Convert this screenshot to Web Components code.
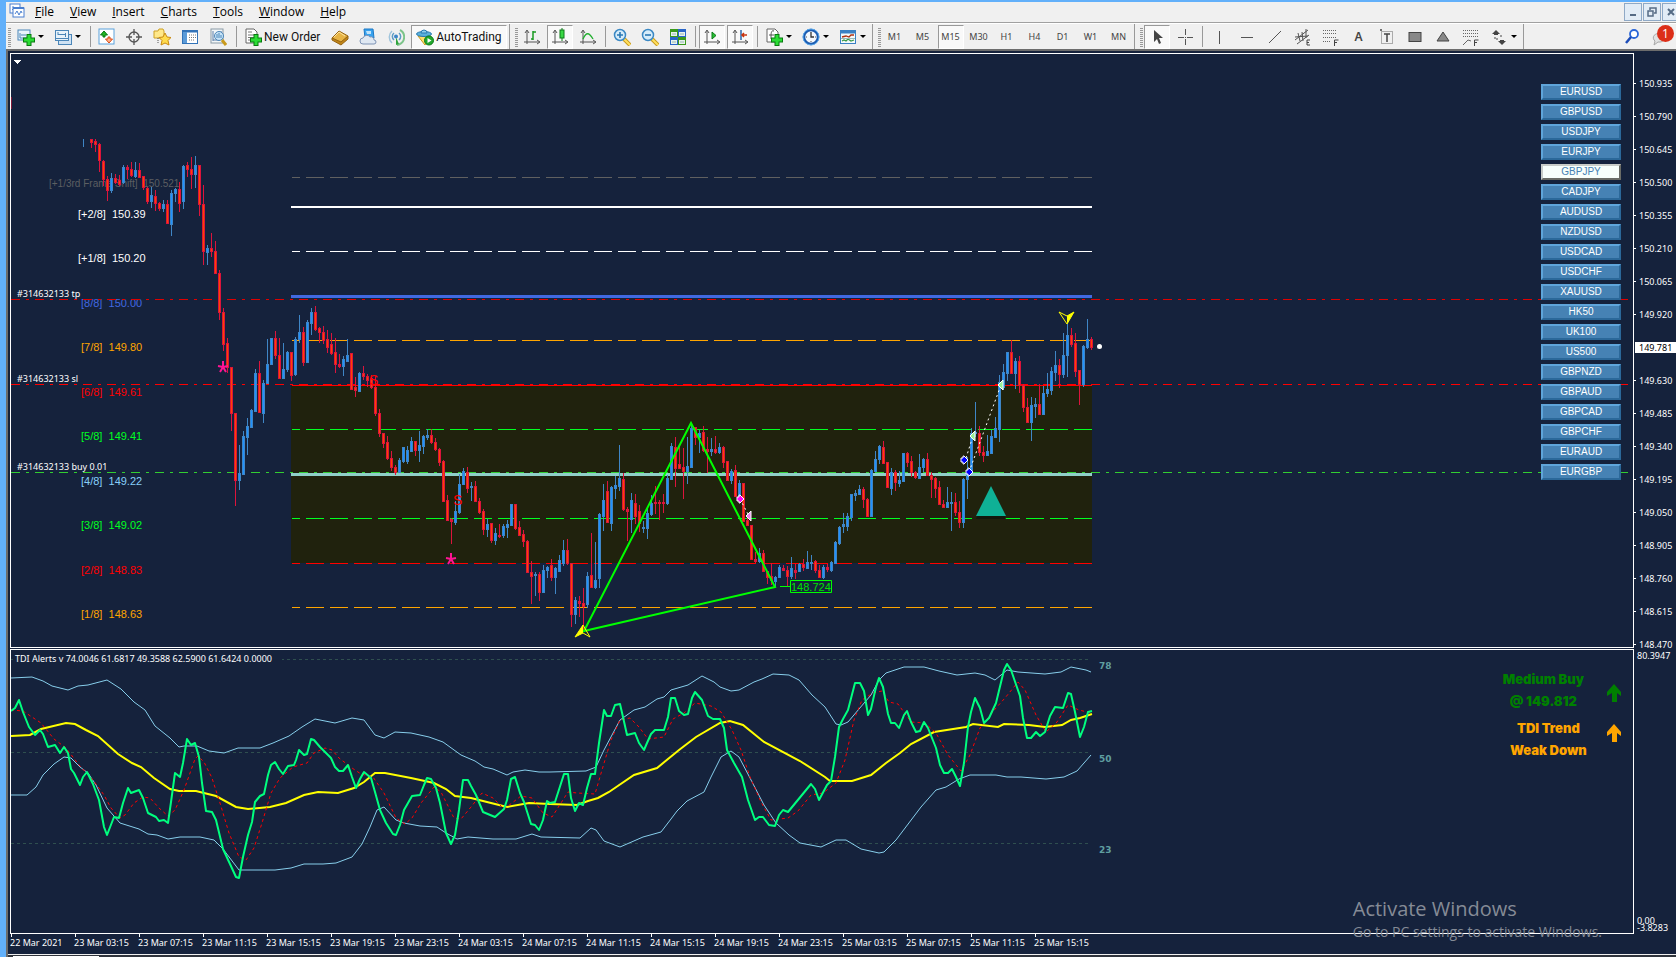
<!DOCTYPE html>
<html lang="en">
<head>
<meta charset="utf-8">
<title>GBPJPY, M15</title>
<style>
html, body { margin: 0; height: 100%; }
body { overflow: hidden; background: #62b0fa; font-family: "Noto Sans", "Open Sans", sans-serif; }
</style>
</head>
<body>
<mt-terminal></mt-terminal>
<script>
const icons = {
  app: '<rect x="1" y="1" width="10" height="9" fill="#fff" stroke="#4a7fd0"/><path d="M3 4h2M3 7l2-2 2 2" stroke="#4a7fd0" fill="none"/><rect x="4" y="5" width="11" height="9" fill="#fff" stroke="#4a7fd0"/><path d="M6 11l2-3 2 4 2-4 1 2" stroke="#4a7fd0" fill="none"/><path d="M4 5h11" stroke="#4a7fd0" stroke-width="2"/>',
  newchart: '<rect x="1" y="2" width="12" height="10" fill="#e8f3fb" stroke="#4b86b8"/><path d="M3 5v5h7M4 7h5" stroke="#4b86b8" fill="none"/><path d="M12 6v12M6 12h12" stroke="#087a10" stroke-width="5"/><path d="M12 7v10M7 12h10" stroke="#2bdc35" stroke-width="3"/>',
  profiles: '<rect x="4.500" y="6.500" width="13" height="10" fill="#cfe2f3" stroke="#4b86b8"/><rect x="1.500" y="2.500" width="13" height="10" fill="#e8f3fb" stroke="#4b86b8"/><path d="M4 4v3M4 6.500h8M11.500 5v4M2 10.500h12" stroke="#4b86b8" fill="none"/>',
  market: '<rect x="2" y="1" width="15" height="15" fill="#fff" stroke="#5aa2dc"/><path d="M7 3l3.500 4H8v2H6V7H3.500z" fill="#22b522" stroke="#087a10"/><path d="M12 15l-3.500-4H11V9h2v2h2.500z" fill="#ffb08a" stroke="#dc4a14"/>',
  cross: '<circle cx="9" cy="9" r="5" fill="none" stroke="#555" stroke-width="1.300"/><path d="M9 1v6M9 11v6M1 9h6M11 9h6" stroke="#555" stroke-width="1.300"/>',
  folder: '<path d="M1 3h4l1-2h4l1 2v7H1z" fill="#ffe88a" stroke="#cda025"/><path d="M5 10v6" stroke="#555" stroke-dasharray="1 1"/><path d="M12 5l2 4 4 .5-3 3 1 4.500-4-2-4 2 1-4.500-3-3 4-.5z" fill="#ffdc4e" stroke="#c98a12"/>',
  terminal: '<rect x="1.500" y="2.500" width="15" height="13" fill="#fff" stroke="#3273b8"/><path d="M1 3.500h16" stroke="#3273b8" stroke-width="2"/><rect x="2" y="4" width="4" height="11" fill="#5b9bd8"/><path d="M8 7h7M8 9.500h7M8 12h5" stroke="#777" stroke-dasharray="1 1"/>',
  tester: '<rect x="2" y="1" width="12" height="14" fill="#f2f6f8" stroke="#8a9aa5"/><path d="M4 3v10M12 3v8M4 12h6" stroke="#5c7fa8"/><circle cx="10" cy="8" r="4.500" fill="#c8e4f8" stroke="#4b86b8"/><path d="M8 6v4M10 5v5M12 7v3" stroke="#4b86b8"/><path d="M13 12l4 5" stroke="#c99a1c" stroke-width="3"/>',
  order: '<path d="M2 1h8l3 3v11H2z" fill="#fff" stroke="#666"/><path d="M4 4h4M4 7h7M4 9.500h7M4 12h3" stroke="#777"/><path d="M12 6v12M6 12h12" stroke="#087a10" stroke-width="5"/><path d="M12 7v10M7 12h10" stroke="#2bdc35" stroke-width="3"/>',
  gold: '<path d="M1 10L8 3l9 5-7 8z" fill="#e7b445" stroke="#966412"/><path d="M1 10l9 4 7-6v3l-7 6-9-5z" fill="#c08518" stroke="#966412"/><path d="M3 9l5-5 6 4" stroke="#ffe7a2" fill="none"/>',
  cloud: '<path d="M5 1h9l1 9H6z" fill="#38a2ee" stroke="#1c78c4"/><path d="M7 3h5v3H8z" fill="#bfe3fb"/><path d="M4 16a3 3 0 010-6 4 4 0 017-1 3 3 0 014 3 2 2 0 010 4z" fill="#dfe8f2" stroke="#7d93b5"/>',
  signal: '<path d="M5 15a8 8 0 010-12" fill="none" stroke="#9fc4dc" stroke-width="1.500"/><path d="M7 12a4.500 4.500 0 010-7M12 5a4.500 4.500 0 010 7" fill="none" stroke="#5c9cc4" stroke-width="1.500"/><path d="M13 2a8 8 0 01-1 14.500l-2 .5" fill="none" stroke="#7cc48a" stroke-width="2"/><path d="M9 9v8l3-1z" fill="#2fa33c"/><circle cx="9" cy="8.500" r="2" fill="#3c86c8"/>',
  expert: '<path d="M2 8h13l-6 9z" fill="#ffdf6b" stroke="#c99a1c"/><ellipse cx="8" cy="6" rx="7.500" ry="2.500" fill="#5ab0dc" stroke="#2a7ab0"/><path d="M5 5a3 3 0 016 0z" fill="#8fd0f0" stroke="#2a7ab0"/><circle cx="13" cy="12.500" r="4.500" fill="#22a82c" stroke="#0d7a18"/><path d="M11.500 10v5l4-2.500z" fill="#fff"/>',
  bars: '<path d="M4 3v13M1 14h15M2 5l2-3 2 3M14 12l3 2-3 2" stroke="#555" fill="none"/><path d="M10 3v9M8 11h2M10 4h3" stroke="#1a9a22" fill="none" stroke-width="1.500"/>',
  candles: '<path d="M4 3v13M1 14h15M2 5l2-3 2 3M14 12l3 2-3 2" stroke="#555" fill="none"/><path d="M11 0v13" stroke="#0d7a18"/><rect x="9" y="2" width="4" height="8" fill="#38d844" stroke="#0d7a18"/>',
  line: '<path d="M4 3v13M1 14h15M2 5l2-3 2 3M14 12l3 2-3 2" stroke="#555" fill="none"/><path d="M4 11c3-7 6-7 10 0" stroke="#1fae2c" fill="none" stroke-width="1.300"/>',
  zoomin: '<path d="M11 11l6 6" stroke="#c99a1c" stroke-width="4"/><path d="M11 11l6 6" stroke="#ffe060" stroke-width="2"/><circle cx="7" cy="7" r="5.500" fill="#d6ecfa" stroke="#3a88c4" stroke-width="1.500"/><path d="M4 7h6M7 4v6" stroke="#2a78b4" stroke-width="1.600"/>',
  zoomout: '<path d="M11 11l6 6" stroke="#c99a1c" stroke-width="4"/><path d="M11 11l6 6" stroke="#ffe060" stroke-width="2"/><circle cx="7" cy="7" r="5.500" fill="#d6ecfa" stroke="#3a88c4" stroke-width="1.500"/><path d="M4 7h6" stroke="#2a78b4" stroke-width="1.600"/>',
  tile: '<rect x="1" y="1" width="8" height="8" fill="#3a9a1c"/><rect x="9" y="1" width="8" height="8" fill="#2a66c8"/><rect x="1" y="9" width="8" height="8" fill="#2a66c8"/><rect x="9" y="9" width="8" height="8" fill="#3a9a1c"/><path d="M2 4h6v4H2zM10 4h6v4h-6zM2 12h6v4H2zM10 12h6v4h-6z" fill="#e8f2ee"/><path d="M3 6h4M11 6h4M3 14h4M11 14h4" stroke="#9ab8b0"/>',
  scroll: '<path d="M4 3v13M1 14h15M2 5l2-3 2 3M14 12l3 2-3 2" stroke="#555" fill="none"/><path d="M9 4v7l4-3.500z" fill="#28c034" stroke="#0d7a18"/>',
  shift: '<path d="M4 3v13M1 14h15M2 5l2-3 2 3M14 12l3 2-3 2" stroke="#555" fill="none"/><path d="M10 2v10" stroke="#2a66a8" stroke-width="1.500"/><path d="M11 7h5M13 5l-2 2 2 2" stroke="#c8320c" fill="none" stroke-width="1.500"/>',
  indicators: '<path d="M2 1h8l3 3v10H2z" fill="#fff" stroke="#666"/><path d="M9 3c-3-1-3 2-3 8M4 7h5" stroke="#555" fill="none"/><path d="M12 6v12M6 12h12" stroke="#087a10" stroke-width="5"/><path d="M12 7v10M7 12h10" stroke="#2bdc35" stroke-width="3"/>',
  clock: '<circle cx="9" cy="9" r="7" fill="#f4f8fc" stroke="#1c5cb0" stroke-width="2.500"/><circle cx="9" cy="9" r="8" fill="none" stroke="#5aa8ec"/><path d="M9 4v5h3" stroke="#333" fill="none" stroke-width="1.300"/><path d="M4 9h1M13 9h1M9 13v1" stroke="#555"/>',
  template: '<rect x="1.500" y="2.500" width="15" height="13" fill="#f4fafc" stroke="#3a80c4"/><path d="M1 4h16" stroke="#3a80c4" stroke-width="3"/><path d="M3 9l4-1 3 1 2-2h3" stroke="#b03010" fill="none" stroke-width="1.300"/><path d="M3 13l2-1 2 1 2-2 3 2 3-1" stroke="#3a9a48" fill="none" stroke-width="1.300"/><path d="M2 10.500h14" stroke="#9bb"/>',
  pointer: '<path d="M6 2v12l3-3 2 5 2-1-2-5h4z" fill="#444"/>',
  cursor: '<path d="M9.500 1v6M9.500 11v6M2 9.500h6M11 9.500h6M9 9.500h1" stroke="#555"/>',
  vline: '<path d="M9.500 3v13" stroke="#555"/>',
  hline: '<path d="M3 9.500h12" stroke="#555"/>',
  trend: '<path d="M3 15L15 3" stroke="#555"/>',
  channel: '<path d="M1 12L14 2M3 16L15 7M4 5l2 8M8 4l1 9M12 1v9M1 9l13-1" stroke="#555" fill="none"/><path d="M16 12h-3v5h3M13 14.500h2" stroke="#444" fill="none"/>',
  fibo: '<path d="M1 2.500h14M1 5.500h14M1 9.500h14M1 13.500h8" stroke="#666" stroke-dasharray="1 1"/><path d="M12.500 18v-6h4M12 14.500h3" stroke="#444" fill="none"/>',
  label: '<rect x="3.500" y="3.500" width="11" height="12" fill="none" stroke="#666" stroke-dasharray="1 1"/><path d="M6 6h6M9 6v8M2 2h2" stroke="#444" stroke-width="1.500"/>',
  rect: '<rect x="3" y="4.500" width="12" height="9" fill="#888" stroke="#444"/>',
  tri: '<path d="M9 4l6 9H3z" fill="#888" stroke="#444"/>',
  expansion: '<path d="M1 2.500h15M1 5.500h15M1 8.500h15" stroke="#666" stroke-dasharray="1 1"/><path d="M1 17l5-5 3 1" stroke="#666" fill="none"/><path d="M12.500 18v-6h4M12 14.500h3" stroke="#444" fill="none"/>',
  arrows: '<path d="M6 2l4 4H8v1H4V6H2zM12 17l-4-4h2v-1h4v1h2z" fill="#444"/><path d="M5 9v2h3M10 8h3" stroke="#444" stroke-dasharray="2 1" fill="none"/>',
  search: '<circle cx="11" cy="6" r="4" fill="#fff" stroke="#2a66d8" stroke-width="1.800"/><path d="M8 9l-5 6" stroke="#1c4cb8" stroke-width="2.500"/>',
  chat: '<path d="M3 12c-3-5 4-8 8-6 4 3 2 9-4 8l-4 3 1-4z" fill="#e2e2e2" stroke="#a8a8a8"/>',
};
const svg = (name) => `<svg viewBox="0 0 18 18" width="18" height="18" aria-hidden="true">${icons[name]}</svg>`;

function define(name, css, html) {
  customElements.define(name, class extends HTMLElement {
    constructor() {
      super();
      const t = document.createElement('template');
      t.innerHTML = `<style>*{box-sizing:border-box}${css}</style>${typeof html === 'function' ? html(this) : html}`;
      this.attachShadow({ mode: 'open' }).append(t.content.cloneNode(true));
    }
  });
}

/* ---------- tool bar parts ---------- */
define('mt-tool', `
  :host { display: block; flex: none; height: 24px; margin-right: 2px; }
  :host([menu]) { margin-right: 0; }
  button { display: flex; align-items: center; justify-content: center; min-width: 26px; height: 24px; margin: 0; padding: 0; border: 1px solid transparent; background: none; color: #444; font: 9px "Noto Sans", sans-serif; }
  svg { display: block; flex: none; }
  :host([menu]) button { width: 37px; justify-content: flex-start; padding-left: 3px; }
  :host([menu]) button::after { content: ""; border: 3px solid transparent; border-top-color: #000; border-bottom: 0; margin-left: 3px; }
  :host([pressed]) button { border-color: #999 #fff #fff #999; background: #f9f9f9; }
  :host([wide]) button { gap: 2px; padding: 0 4px; font-size: 12px; font-family: Roboto, sans-serif; color: #111; }
  :host([glyph]) button { font-size: 12px; font-weight: 600; }
`, (el) => {
  const icon = el.getAttribute('icon'), name = el.getAttribute('name');
  return `<button type="button" ${name ? `aria-label="${name}"` : ''}>${icon ? svg(icon) : ''}<slot></slot></button>`;
});
define('mt-divider', `
  :host { display: flex; justify-content: center; flex: none; width: 6px; height: 21px; }
  i { width: 1px; background: #999; }
`, '<i></i>');
define('mt-grip', `
  :host { display: block; flex: none; width: 10px; height: 25px; padding: 4px 0 3px 5px; border-left: 1px solid #999; }
  :host([first]) { width: 7px; padding-left: 2px; border: 0; }
  i { display: block; width: 3px; height: 19px; background: repeating-linear-gradient(#999 0 1px, transparent 1px 2px); }
`, '<i></i>');

define('mt-menu-bar', `
  :host { display: flex; align-items: center; height: 20px; background: #f0f0f0; padding-left: 3px; }
  svg { flex: none; }
  nav { display: flex; flex: 1; }
  nav button { border: 0; background: none; margin: 0; padding: 0 8px; font: 12px/18px "Open Sans", sans-serif; color: #000; }
  .win { display: flex; gap: 1px; margin-right: -4px; }
  .win button { display: grid; place-items: center; width: 18px; height: 18px; padding: 0; border: 1px solid #8fa9c6; background: #e2ecf6; }
`, `${svg('app')}<nav aria-label="Main">${['File','View','Insert','Charts','Tools','Window','Help'].map(m => `<button type="button"><u>${m[0]}</u>${m.slice(1)}</button>`).join('')}</nav>
<div class="win">
<button type="button" aria-label="Minimize"><svg width="10" height="10"><path d="M2 8h6" stroke="#556b85" stroke-width="2"/></svg></button>
<button type="button" aria-label="Restore"><svg width="10" height="10"><path d="M3 3V1h6v5H7M1 4h5v5H1z" stroke="#556b85" fill="none" stroke-width="1.500"/></svg></button>
<button type="button" aria-label="Close"><svg width="10" height="10"><path d="M2 2l6 6M8 2L2 8" stroke="#556b85" stroke-width="2"/></svg></button></div>`);

define('mt-toolbar', `
  :host { display: flex; align-items: center; height: 26px; background: #f0f0f0; border-top: 1px solid #fff; padding-right: 1px; box-shadow: 0 -1px #a0a0a0; }
  .end { margin-left: auto; display: flex; }
  .edge { width: 1px; height: 25px; background: #999; }
  .chat { position: relative; display: block; }
  .badge { position: absolute; right: 1px; top: 0; width: 17px; height: 17px; border-radius: 50%; background: #dc2e18; color: #fff; font: 12px/17px "Open Sans", sans-serif; text-align: center; }
`, `<mt-grip first></mt-grip>
<mt-tool icon="newchart" name="New chart" menu></mt-tool><mt-tool icon="profiles" name="Profiles" menu></mt-tool><mt-divider></mt-divider>
<mt-tool icon="market" name="Market Watch"></mt-tool><mt-tool icon="cross" name="Data Window"></mt-tool><mt-tool icon="folder" name="Navigator"></mt-tool><mt-tool icon="terminal" name="Terminal"></mt-tool><mt-tool icon="tester" name="Strategy Tester"></mt-tool><mt-divider></mt-divider>
<mt-tool icon="order" wide>New Order</mt-tool>
<mt-tool icon="gold" name="MetaEditor"></mt-tool><mt-tool icon="cloud" name="Virtual hosting"></mt-tool><mt-tool icon="signal" name="Signals"></mt-tool>
<mt-tool icon="expert" wide pressed>AutoTrading</mt-tool><mt-grip></mt-grip>
<mt-tool icon="bars" name="Bar chart"></mt-tool><mt-tool icon="candles" name="Candlesticks" pressed></mt-tool><mt-tool icon="line" name="Line chart"></mt-tool><mt-divider></mt-divider>
<mt-tool icon="zoomin" name="Zoom in"></mt-tool><mt-tool icon="zoomout" name="Zoom out"></mt-tool><mt-tool icon="tile" name="Tile windows"></mt-tool><mt-divider></mt-divider>
<mt-tool icon="scroll" name="Auto scroll" pressed></mt-tool><mt-tool icon="shift" name="Chart shift" pressed></mt-tool><mt-divider></mt-divider>
<mt-tool icon="indicators" name="Indicators" menu></mt-tool><mt-tool icon="clock" name="Periods" menu></mt-tool><mt-tool icon="template" name="Templates" menu></mt-tool><mt-grip></mt-grip>
${['M1','M5','M15','M30','H1','H4','D1','W1','MN'].map(t => `<mt-tool ${t === 'M15' ? 'pressed' : ''}>${t}</mt-tool>`).join('')}<mt-grip></mt-grip>
<mt-tool icon="pointer" name="Cursor" pressed></mt-tool><mt-tool icon="cursor" name="Crosshair"></mt-tool><mt-divider></mt-divider>
<mt-tool icon="vline" name="Vertical line"></mt-tool><mt-tool icon="hline" name="Horizontal line"></mt-tool><mt-tool icon="trend" name="Trendline"></mt-tool><mt-tool icon="channel" name="Channel"></mt-tool><mt-tool icon="fibo" name="Fibonacci"></mt-tool><mt-tool glyph>A</mt-tool><mt-tool icon="label" name="Text label"></mt-tool><mt-tool icon="rect" name="Rectangle"></mt-tool><mt-tool icon="tri" name="Triangle"></mt-tool><mt-tool icon="expansion" name="Expansion"></mt-tool><mt-tool icon="arrows" name="Arrows" menu></mt-tool><span class="edge"></span>
<span class="end"><mt-tool icon="search" name="Search"></mt-tool><span class="chat"><mt-tool icon="chat" name="Messages"></mt-tool><span class="badge">1</span></span></span>`);

/* ---------- price chart ---------- */
/* One entry per bar: direction, high, body top, body bottom, low. Bars are 4px apart. */
const bars = `b139 139 139 147|-|r139 139 142 148|r139 141 144 152|r143 144 160 172|r160 161 179 186|r176 179 190 201|b173 178 190 193|r174 178 182 184|r175 180 184 186|b165 167 182 184|r165 167 169 179|r162 169 175 177|b162 170 176 178|r163 170 177 178|r176 176 187 190|r187 188 201 204|b187 195 201 208|r190 196 203 211|r202 203 208 211|b200 204 208 212|r200 204 223 224|b190 193 224 236|b188 189 193 202|r182 189 203 212|b165 166 201 209|r162 165 169 177|r157 169 174 189|b156 165 174 188|r165 165 204 216|r185 204 251 265|b245 248 252 265|r233 248 251 257|r241 251 273 274|r270 273 312 320|r308 312 344 351|r338 343 367 373|r367 367 413 431|r413 413 480 506|b445 473 480 490|b431 436 474 475|b418 426 437 455|b409 410 427 428|b369 373 411 412|r361 373 412 413|b380 383 413 423|b339 364 383 384|b338 338 364 365|r331 338 355 359|r338 355 378 379|b343 369 378 379|b351 352 369 372|r352 352 375 381|b337 339 374 376|b315 332 339 343|r327 332 362 366|b320 322 362 363|b308 312 323 335|r306 312 329 331|r327 328 332 343|r326 332 340 344|r330 339 347 353|r333 344 353 355|r338 352 364 373|r354 364 366 368|b356 359 366 376|b339 355 361 362|r353 353 389 390|r377 387 390 397|b372 373 391 392|r366 373 376 380|r374 376 380 387|r375 378 387 389|r376 387 413 416|r409 413 433 437|r433 433 443 448|r436 442 458 460|r451 458 467 471|r465 467 472 475|b458 460 472 472|b447 447 461 463|b446 450 461 464|b437 441 451 451|r441 441 450 456|b431 445 450 462|b435 436 446 454|b429 435 437 440|r429 435 442 444|r438 442 449 451|r448 449 462 466|r460 461 501 502|r495 500 520 521|r518 519 521 544|b501 511 522 525|b474 484 512 514|b468 471 484 485|r467 472 488 493|b482 486 487 501|r481 486 501 501|r498 501 512 514|r509 511 529 535|b519 524 529 537|r523 523 540 543|b528 533 540 545|r524 535 536 538|b524 526 535 538|b520 524 527 538|b504 504 525 525|r504 504 528 530|r521 527 535 536|r530 534 541 547|r540 541 572 573|r561 572 576 604|b572 574 575 596|r572 574 592 601|b565 570 592 592|b566 567 570 578|r559 565 577 581|b567 568 577 594|b555 560 571 572|b540 550 563 566|r539 550 563 565|r563 563 614 627|b597 600 614 624|r596 601 603 617|r588 603 606 632|b572 576 604 608|r533 575 587 587|b542 580 587 589|b513 514 578 588|b484 500 516 531|r481 491 522 523|b486 487 523 531|b476 485 488 499|b445 478 486 491|r473 479 509 511|r507 509 511 541|b493 500 519 533|r494 503 516 524|r505 511 523 532|b521 527 528 533|b508 513 528 539|b495 503 514 516|r486 502 503 514|r500 502 503 520|r494 502 503 513|b475 478 503 505|b443 446 479 480|r437 447 468 487|r446 464 468 468|r448 467 471 499|b437 466 471 484|b425 428 467 467|r427 427 437 445|b430 433 437 453|r426 432 450 452|r437 449 451 473|b438 449 451 456|r436 449 452 454|b443 447 452 454|r446 447 462 468|r461 461 480 480|b469 471 480 484|r465 470 496 497|b480 483 496 496|r483 483 521 522|r515 520 525 525|r525 525 559 560|r552 559 561 563|b548 553 561 563|r550 553 571 572|r571 571 577 584|r563 576 580 585|b576 577 581 587|b565 567 577 577|r565 568 570 571|r566 570 576 587|b557 568 576 579|r564 570 572 579|b563 564 571 571|r559 564 567 571|b551 562 568 568|b555 562 563 570|r560 561 570 573|r565 570 577 577|b565 567 577 579|r564 567 569 572|b561 562 570 572|b541 542 563 563|b526 527 543 545|b513 524 526 533|b513 516 526 531|b494 494 517 521|b490 493 495 501|b485 489 494 494|r487 489 499 508|r498 499 516 517|b469 470 516 517|b451 459 471 471|b445 446 459 464|r441 447 463 464|r462 462 487 488|b468 472 488 495|r470 472 482 491|b471 480 483 487|b453 453 481 482|r452 453 462 467|r456 461 472 477|r471 472 477 479|b454 467 478 478|b458 459 467 472|r453 459 475 475|r472 475 479 498|r477 478 488 498|r481 487 504 505|r500 504 507 507|b487 502 507 507|b492 502 503 531|r493 502 512 516|r501 512 522 528|b478 479 522 528|b457 470 479 499|b428 433 472 472|b402 432 433 437|r426 433 452 456|r446 452 455 462|b435 451 455 456|b430 436 453 454|b417 428 437 437|b375 382 429 442|b364 372 387 390|b352 352 373 381|r340 352 373 373|b358 361 373 389|r356 361 385 393|r384 385 407 412|r398 407 422 423|b397 405 422 441|b398 404 406 418|r384 404 414 415|b386 393 414 414|b373 389 393 397|b367 371 390 395|b351 365 372 381|r359 365 374 388|b333 355 374 378|b324 335 355 377|r328 335 344 347|r333 343 371 377|r370 370 384 405|b345 346 384 387|b319 339 347 349|r337 339 347 350`.split('|');
const drawBars = () => {
  const edge = { r: '', b: '' }, core = { r: '', b: '' };
  bars.forEach((bar, i) => {
    if (bar === '-') return;
    const c = bar[0], [h, t, b, l] = bar.slice(1).split(' ').map(Number), x = 83 + 4 * i;
    edge[c] += `M${x} ${h}h1V${l}h-1z`;
    if (b > t) edge[c] += `M${x - 1} ${t}h3V${b + 1}h-3z`;
    if (b - t > 2) core[c] += `M${x} ${t + 1}h1V${b}h-1z`;
  });
  return `<path fill="#dc143c" d="${edge.r}"/><path fill="#3f86c6" d="${edge.b}"/><path fill="#ff4500" d="${core.r}"/><path fill="#1e90ff" d="${core.b}"/>`;
};
const level = (y, color, w = 0) => w
  ? `<rect x="291" y="${y}" width="801" height="${w}" fill="${color}"/>`
  : `<path d="M292 ${y + .5}H1092" stroke="${color}" stroke-dasharray="18 6" stroke-dashoffset="10"/>`;
const trade = (y, color) => `<path d="M11 ${y + .5}H1628" stroke="${color}" stroke-dasharray="9 6 3 6"/>`;
const note = (x, y, color, text) => `<text x="${x}" y="${y}" fill="${color}">${text.replace(/  /g, '&nbsp;&nbsp;')}</text>`;
const star = (x, y) => `<path d="M${x} ${y}v-6M${x} ${y}l-5-1M${x} ${y}l5-1M${x} ${y}l-3 5M${x} ${y}l3 5" stroke="#ff1493" stroke-width="2" fill="none"/>`;
const entry = (x, y, color) => `<path d="M${x - 3} ${y - 2}h2v-2h1l4 4-4 4h-1v-2h-2z" fill="${color}" stroke="#fff"/>`;
const exit = (x, y, color) => `<path d="M${x - 3} ${y}l5-5v10z" fill="${color}" stroke="#fff"/>`;

define('mt-price-chart', `
  :host { display: flex; position: relative; justify-content: flex-end; border: 1px solid #fff; min-width: 0; min-height: 0; overflow: hidden; }
  svg { position: absolute; inset: 0; width: 100%; height: 100%; }
  .murrey { font: 11px "Liberation Sans", Arial, sans-serif; }
  .shift { font: 10px "Liberation Sans", Arial, sans-serif; }
  .order { font: 9px "Noto Sans", sans-serif; }
  .mark { font: 14px "Liberation Sans", Arial, sans-serif; }
  slot { display: block; position: relative; }
`, `<svg role="img" aria-label="GBPJPY M15 candles"><g transform="translate(-11 -54)" fill="none">
<g shape-rendering="crispEdges">
<path d="M13 60h8l-4 4z" fill="#fff"/><rect x="11" y="97" width="1" height="12" fill="#801838"/>
<rect x="291" y="386" width="801" height="177" fill="#20220d"/>
${level(177, '#606060')}${level(206, '#fff', 2)}${level(251, '#fff')}${level(295, '#4169e1', 3)}${level(340, '#ffa500')}
<path d="M292 385.500H1092" stroke="#f00"/>${level(429, '#00ff21')}${level(473, '#8fd0c8', 3)}${level(518, '#00ff21')}${level(563, '#f00')}${level(607, '#ffa500')}
</g>
<g class="shift">${note(49, 187, '#5c5f62', '[+1/3rd Frame Shift]  150.521')}</g>
<g class="murrey">${note(78, 218, '#fff', '[+2/8]  150.39')}${note(78, 262, '#fff', '[+1/8]  150.20')}${note(81, 307, '#4169e1', '[8/8]  150.00')}${note(81, 351, '#ffa500', '[7/8]  149.80')}${note(81, 396, '#f00', '[6/8]  149.61')}${note(81, 440, '#00ff21', '[5/8]  149.41')}${note(81, 485, '#87cefa', '[4/8]  149.22')}${note(81, 529, '#00ff21', '[3/8]  149.02')}${note(81, 574, '#f00', '[2/8]  148.83')}${note(81, 618, '#ffa500', '[1/8]  148.63')}</g>
<g class="order">${note(17, 297, '#fff', '#314632133 tp')}${note(17, 382, '#fff', '#314632133 sl')}${note(17, 470, '#fff', '#314632133 buy 0.01')}</g>
<g shape-rendering="crispEdges">${trade(299, '#e00000')}${trade(384, '#f00')}${trade(472, '#32cd32')}${drawBars()}</g>
<g class="mark">${note(369, 385, '#f00', 'S')}${note(453, 505, '#f00', 'S')}</g>
${star(223, 367)}${star(451, 559)}
<path d="M584 631L691 423L775 587z" stroke="#0f0" stroke-width="2"/>
<path d="M780 586.500h10M790.500 580.500h41v12h-41z" stroke="#0f0"/><g class="murrey">${note(791, 591, '#00e000', '148.724')}</g>
<path d="M583 625l-8 12 8-4 7 4z" stroke="#ff0"/><path d="M583 625l-8 12 8-4z" fill="#ff0"/>
<path d="M1067 324l-8-12 8 4 7-4z" stroke="#ff0"/><path d="M1067 324l7-12-7 4z" fill="#ff0"/>
<path d="M966 458l7-22M969 472l32-87M740 499l9 17" stroke="#fff" stroke-dasharray="2 3"/>
${entry(964, 460, '#00f')}${entry(969, 472, '#00f')}${entry(740, 499, '#f0f')}${exit(973, 436, '#98f098')}${exit(1001, 385, '#98f098')}${exit(749, 516, '#ee82ee')}
<path d="M991 488l15 31h-30z" fill="#12180c"/><path d="M991 486l15 30h-30z" fill="#0fb196"/>
<circle cx="1099.500" cy="346.500" r="2.500" fill="#fff"/>
</g></svg><slot></slot>`);

const symbols = 'EURUSD GBPUSD USDJPY EURJPY GBPJPY CADJPY AUDUSD NZDUSD USDCAD USDCHF XAUUSD HK50 UK100 US500 GBPNZD GBPAUD GBPCAD GBPCHF EURAUD EURGBP'.split(' ');
define('mt-symbol-list', `
  :host { display: flex; flex-direction: column; gap: 4px; padding: 30px 12px 0 0; }
  button { width: 80px; height: 16px; margin: 0; padding: 0; border: 2px solid; border-color: #5fa5da #2b6899 #2b6899 #5fa5da; background: #4682b4; color: #fff; font: 10px/12px "Liberation Sans", Arial, sans-serif; text-align: center; }
  button[aria-pressed] { border-color: #c8ccc8 #6a6c66 #6a6c66 #c8ccc8; background: #f8fffb; color: #4682b4; }
`, symbols.map(s => `<button type="button" ${s === 'GBPJPY' ? 'aria-pressed="true"' : ''}>${s}</button>`).join(''));

/* ---------- oscillator ---------- */
const upper = '11,678 32,677 43,681 52,686 68,690 78,686 88,685 107,680 121,689 134,702 145,710 155,726 170,738 179,747 184,746 197,746 209,751 224,753 238,748 260,748 273,743 289,736 302,727 315,719 335,723 352,718 364,720 375,735 384,738 395,732 411,733 429,737 443,742 461,755 475,761 484,767 493,769 507,775 513,772 525,770 539,772 550,772 586,771 596,767 604,750 620,720 634,710 645,707 657,699 664,697 671,690 688,685 702,676 714,682 720,687 731,691 739,690 754,682 762,679 773,674 789,675 799,680 812,695 825,707 836,724 841,725 848,722 859,709 871,695 879,680 886,673 904,667 924,667 939,671 957,675 975,673 985,675 995,680 1007,670 1018,672 1045,674 1061,672 1071,667 1086,670 1091,672';
const lower = '11,795 27,795 36,787 43,775 54,764 64,757 71,758 80,767 88,773 96,785 107,808 120,823 139,829 148,834 157,835 168,839 180,837 200,837 214,840 223,849 239,870 254,870 275,870 291,868 304,864 323,864 336,863 352,857 362,844 370,827 377,810 384,807 396,820 404,823 420,826 437,827 446,833 457,839 468,837 493,839 516,839 532,834 541,837 580,838 591,828 596,830 604,841 620,847 643,837 661,832 671,819 677,811 687,801 704,792 711,777 721,757 731,751 739,757 750,778 764,805 776,823 789,835 800,843 821,847 836,840 846,840 861,849 879,853 884,852 896,840 921,807 936,790 946,787 959,779 970,775 996,775 1007,777 1021,777 1046,779 1064,777 1077,771 1091,755';
const base = '11,736 30,735 41,729 66,723 75,724 86,730 98,736 118,754 132,763 141,767 154,778 170,789 179,791 196,791 216,796 236,807 248,809 270,807 286,803 304,795 318,792 338,793 354,788 364,782 375,773 385,773 411,778 434,783 446,789 455,796 471,798 491,803 507,807 529,803 550,804 577,805 588,801 598,798 609,792 634,775 657,768 679,750 696,737 720,723 730,721 743,725 764,742 800,761 825,777 830,781 852,781 871,775 886,763 900,753 911,744 934,732 966,727 973,724 998,727 1004,724 1029,725 1045,727 1062,725 1071,720 1080,718 1092,714';
const fast = '11,711 15,708 19,700 23,712 29,727 35,735 40,730 43,734 48,747 55,745 60,753 64,747 68,753 71,769 74,773 80,785 83,777 87,772 93,784 99,800 104,827 107,835 114,817 119,818 123,803 128,788 131,793 139,790 143,798 148,813 156,817 159,821 164,820 168,823 171,802 175,773 180,777 183,763 187,739 191,745 195,743 199,757 202,783 206,811 212,812 216,820 223,849 230,864 236,877 239,878 243,857 248,835 252,822 255,802 260,796 264,794 268,775 271,765 275,762 279,769 283,774 288,766 294,765 296,760 299,750 304,755 307,754 311,739 314,740 320,747 331,758 335,767 339,771 343,771 348,765 352,777 356,788 360,779 364,772 371,778 375,792 380,810 386,823 393,834 396,835 400,825 404,810 412,796 420,795 424,785 427,778 431,779 436,788 440,803 446,833 451,844 455,835 459,810 463,780 468,780 471,786 476,795 483,812 495,817 504,809 507,800 511,779 515,777 520,793 524,802 531,824 535,825 539,830 543,820 547,801 550,803 555,802 564,774 568,774 571,798 575,811 579,803 583,805 587,788 591,774 595,774 599,743 604,710 607,716 611,716 615,705 620,704 623,717 627,735 635,733 639,743 644,750 647,743 651,734 655,730 664,730 668,717 671,698 675,698 679,711 684,715 688,714 692,698 695,692 702,700 708,716 713,719 720,719 724,728 727,750 734,763 742,777 748,800 755,820 759,817 763,817 769,825 775,826 779,815 783,810 788,812 811,784 815,789 819,800 827,785 831,781 835,757 839,727 843,719 848,710 855,683 860,683 864,691 868,715 871,709 876,687 879,678 883,687 888,714 891,723 895,723 899,728 904,715 907,711 911,722 916,732 920,731 924,722 928,728 936,748 940,765 944,773 948,773 952,769 956,777 960,786 964,763 968,727 971,712 975,698 980,708 984,723 989,718 996,703 1004,670 1007,664 1011,670 1020,696 1023,718 1027,738 1031,738 1036,732 1040,736 1045,732 1050,716 1055,707 1063,708 1068,693 1071,694 1075,712 1080,737 1084,727 1088,712 1092,711';
const signal = '11,710 23,711 41,723 54,739 66,748 79,765 93,780 104,795 111,808 120,818 125,815 134,803 143,797 150,798 159,808 168,816 175,810 184,790 195,759 198,756 204,762 212,778 220,803 229,833 239,857 246,860 254,848 262,823 271,793 280,778 293,767 307,763 314,753 325,748 332,750 339,758 352,768 361,774 373,777 384,793 396,818 405,824 412,818 421,803 434,787 441,792 454,818 461,819 471,807 482,793 493,798 504,809 512,803 521,796 532,798 543,813 552,817 561,803 568,792 577,793 595,794 602,770 611,740 620,720 630,718 639,727 648,739 664,737 673,719 684,713 695,703 711,706 721,712 732,730 741,750 750,777 761,802 771,820 788,818 798,811 811,795 823,793 836,783 845,760 854,720 862,700 873,693 882,691 889,702 898,704 911,722 925,723 936,733 948,755 961,771 970,755 980,728 996,708 1005,698 1018,682 1025,690 1036,715 1046,732 1057,722 1068,705 1079,710 1091,713';
const up = (color) => `<svg width="16" height="18" aria-hidden="true"><path d="M8 0l7 8v4l-4-3v9H6V9l-5 3V8z" fill="${color}"/></svg>`;
define('mt-oscillator', `
  :host { display: flex; position: relative; justify-content: flex-end; align-items: flex-start; border: 1px solid #fff; min-width: 0; min-height: 0; overflow: hidden; }
  .plot { position: absolute; inset: 0; width: 100%; height: 100%; }
  .head { font: 9px "Noto Sans", sans-serif; }
  .grid { font: bold 9px "DejaVu Sans", sans-serif; }
  aside { position: relative; display: flex; padding: 18px 11px 0 0; font: 900 13px/22px Inter, sans-serif; text-align: center; }
  p { margin: 0 0 5px; color: #008000; padding-right: 22px; }
  p + p { color: #ffa500; padding: 0 17px 0 5px; }
  .arrows { display: flex; flex-direction: column; gap: 22px; padding-top: 16px; }
`, `<svg class="plot" role="img" aria-label="TDI oscillator"><g transform="translate(-11 -650)" fill="none">
<path d="M11 659.500H1088M11 752.500H1088M11 843.500H1088" stroke="#2f4f4f" stroke-dasharray="3 3"/>
<rect x="13" y="655" width="269" height="9" fill="#15223c"/>
<g stroke="#87ceeb" stroke-width="1"><polyline points="${upper}"/><polyline points="${lower}"/></g>
<polyline points="${base}" stroke="#ff0" stroke-width="2"/>
<polyline points="${signal}" stroke="#f00" stroke-dasharray="3 3"/>
<polyline points="${fast}" stroke="#00ff7f" stroke-width="2" stroke-linejoin="round"/>
<g class="head">${note(15, 662, '#fff', 'TDI Alerts v 74.0046 61.6817 49.3588 62.5900 61.6424 0.0000')}</g>
<g class="grid">${note(1099, 669, '#5f9ea0', '78')}${note(1099, 762, '#5f9ea0', '50')}${note(1099, 853, '#5f9ea0', '23')}</g>
</g></svg>
<aside><div><p>Medium Buy<br>@ 149.812</p><p>TDI Trend<br>Weak Down</p></div><div class="arrows">${up('#008000')}${up('#ffa500')}</div></aside>`);

/* ---------- scales ---------- */
const prices = Array.from({ length: 18 }, (_, i) => (150.935 - i * .145).toFixed(3));
define('mt-price-scale', `
  :host { display: block; min-height: 0; color: #fff; font: 9px/11px "Noto Sans", sans-serif; }
  ol { list-style: none; margin: 0; padding: 14px 0 0; }
  li { display: flex; align-items: center; height: 33px; }
  li::before { content: ""; width: 2px; height: 1px; background: #fff; }
  span { flex: 1; padding-left: 3px; }
  .now::before { display: none; }
  .now span { margin-left: 1px; padding-left: 4px; background: #fff; color: #000; }
`, `<ol>${prices.map((p, i) => i === 8 ? '<li class="now"><span>149.781</span></li>' : `<li><span>${p}</span></li>`).join('')}</ol>`);
define('mt-value-scale', `
  :host { display: flex; flex-direction: column; min-height: 0; color: #fff; font: 9px/12px "Noto Sans", sans-serif; padding-top: 1px; }
  span { padding-left: 3px; }
  span + span { margin-top: auto; margin-bottom: -5px; }
  span:last-child { margin-top: 0; margin-bottom: 0; }
`, '<span>80.3947</span><span>0.00</span><span>-3.8283</span>');

const times = ['22 Mar 2021', ...['03:15','07:15','11:15','15:15','19:15','23:15'].map(t => '23 Mar ' + t), ...['03:15','07:15','11:15','15:15','19:15','23:15'].map(t => '24 Mar ' + t), ...['03:15','07:15','11:15','15:15'].map(t => '25 Mar ' + t)];
define('mt-time-axis', `
  :host { display: block; overflow: hidden; color: #fff; font: 9px/12px "Noto Sans", sans-serif; }
  ol { display: flex; list-style: none; margin: 0; padding: 0; }
  li { flex: none; width: 64px; white-space: nowrap; }
  li::before { content: ""; display: block; width: 1px; height: 3px; margin-left: 1px; background: #fff; }
`, `<ol>${times.map(t => `<li>${t}</li>`).join('')}</ol>`);

define('mt-activation', `
  :host { display: block; color: #858b96; font-family: "Open Sans", sans-serif; pointer-events: none; }
  p { margin: 0; font-size: 14px; line-height: 20px; white-space: nowrap; }
  .title { font-size: 20px; line-height: 26px; }
`, '<p class="title">Activate Windows</p><p>Go to PC settings to activate Windows.</p>');

define('mt-terminal', `
  :host { display: grid; grid-template-rows: 20px 27px 1fr; height: 100vh; padding: 2px 0 0 6px; box-sizing: border-box; }
  mt-toolbar { margin-top: 1px; }
  main { display: grid; position: relative; grid-template: 595fr 285fr 19px / 1fr 42px; gap: 1px 0; min-height: 0; padding: 2px 0 0 2px; border: solid #6c6c6c; border-width: 2px 0 0 2px; background: #15223c; }
  mt-time-axis { grid-column: 1 / -1; margin-top: -1px; }
  footer { grid-column: 1 / -1; height: 3px; margin: -1px 0 0 -2px; border-top: 1px solid #f0f0f0; background: linear-gradient(#fff, #fff) 5px 1px / 86px 2px no-repeat #30343c; }
  mt-activation { position: absolute; right: 74px; bottom: 15px; }
`, `<mt-menu-bar></mt-menu-bar><mt-toolbar></mt-toolbar>
<main>
<mt-price-chart><mt-symbol-list></mt-symbol-list></mt-price-chart><mt-price-scale></mt-price-scale>
<mt-oscillator></mt-oscillator><mt-value-scale></mt-value-scale>
<mt-time-axis></mt-time-axis><footer></footer><mt-activation></mt-activation>
</main>`);
</script>
</body>
</html>
